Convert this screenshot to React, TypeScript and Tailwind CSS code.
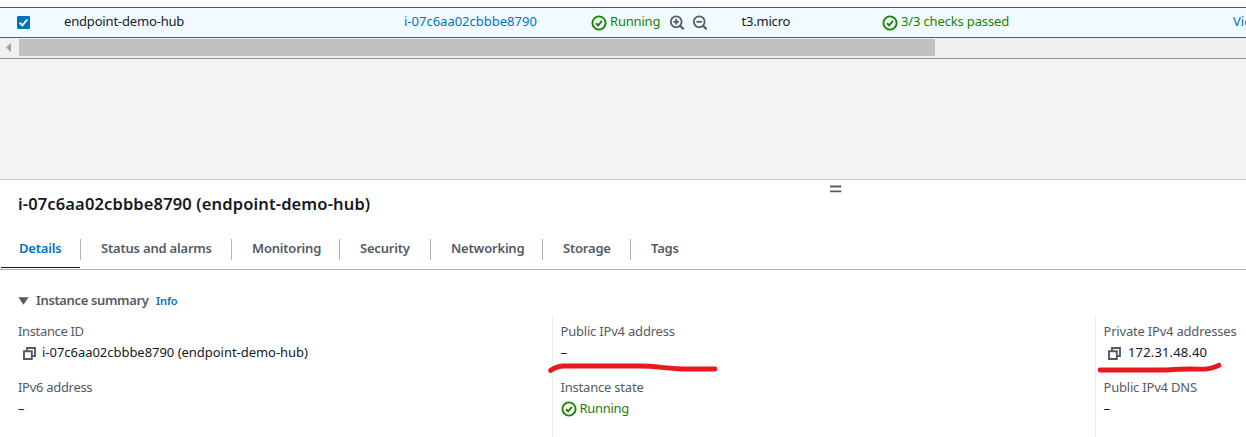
import React from "react";

type IconProps = { className?: string };

function StatusCheck({ className = "" }: IconProps) {
  return (
    <svg className={`h-4 w-4 shrink-0 ${className}`} viewBox="0 0 16 16" fill="none" stroke="currentColor" strokeWidth="1.9">
      <circle cx="8" cy="8" r="6.6" />
      <path d="M4.9 8.2 7.2 10.3 11 5.9" />
    </svg>
  );
}

function Zoom({ plus }: { plus?: boolean }) {
  return (
    <svg className="h-4 w-4 shrink-0 text-[#545b64]" viewBox="0 0 16 16" fill="none" stroke="currentColor" strokeWidth="1.8">
      <circle cx="7.2" cy="6.8" r="5.4" />
      <path d="M10.9 10.5 14.6 14.2" strokeWidth="2.2" />
      <path d="M4.4 6.8H10" strokeWidth="1.8" />
      {plus && <path d="M7.2 4V9.6" strokeWidth="1.8" />}
    </svg>
  );
}

function Copy() {
  return (
    <svg className="h-[13px] w-[13px] shrink-0 text-[#545b64]" viewBox="0 0 13 13" fill="none" stroke="currentColor" strokeWidth="1.9">
      <path d="M1 4.2H8.8V12H1Z" />
      <path d="M4 4V1H12V9H9" />
    </svg>
  );
}

const tabs = [
  { label: "Status and alarms", box: "w-[151px]" },
  { label: "Monitoring", box: "w-[108px]" },
  { label: "Security", box: "w-[91px]" },
  { label: "Networking", box: "w-[112px]" },
  { label: "Storage", box: "w-[88px]" },
  { label: "Tags", box: "w-[80px]" },
];

function Label({ children }: { children: React.ReactNode }) {
  return <div className="h-[22px] leading-[22px] tracking-[-0.2px] text-[#545b64]">{children}</div>;
}

export default function App() {
  return (
    <div className="relative flex h-[437px] w-[1246px] flex-col overflow-hidden whitespace-nowrap bg-white font-['Noto_Sans',sans-serif] text-[13px] text-[#16191f]">
      <div className="mt-[7px] flex h-[31px] shrink-0 items-center border-y border-[#0073bb] bg-[#f1faff] leading-5">
        <div className="flex w-16 shrink-0 pl-[17px]">
          <svg className="h-[13px] w-[13px]" viewBox="0 0 13 13">
            <rect width="13" height="13" rx="1.3" fill="#0073bb" />
            <path d="M2.7 6.7 5.4 9.3 10.3 3.5" fill="none" stroke="#fff" strokeWidth="1.9" />
          </svg>
        </div>
        <div className="w-[340px] shrink-0 pb-[3px] tracking-[-0.17px]">endpoint-demo-hub</div>
        <div className="w-[186.5px] shrink-0 pb-[3px] text-[#0073bb]">i-07c6aa02cbbbe8790</div>
        <div className="flex w-[151px] shrink-0 items-center text-[#1d8102]">
          <StatusCheck />
          <span className="ml-[3.5px] w-[55px] pb-[3px] tracking-[-0.2px]">Running</span>
          <span className="ml-[4px] flex gap-[7px]">
            <Zoom plus />
            <Zoom />
          </span>
        </div>
        <div className="w-[140px] shrink-0 pb-[3px] tracking-[-0.2px]">t3.micro</div>
        <div className="flex w-[351.5px] shrink-0 items-center text-[#1d8102]">
          <StatusCheck />
          <span className="ml-[3.5px] pb-[3px] tracking-[-0.15px]">3/3 checks passed</span>
        </div>
        <div className="shrink-0 pb-[3px] text-[#0073bb]">View alarms</div>
      </div>
      <div className="flex h-[20px] shrink-0 items-start bg-[#f0f0f0] pt-px">
        <svg className="h-[17px] w-[19px]" viewBox="0 0 19 17">
          <path d="M11 4V13L6 8.5Z" fill="#a0a0a0" />
        </svg>
        <div className="h-[17px] w-[916px] bg-[#c1c1c1]" />
      </div>
      <div className="h-[121px] shrink-0 border-t border-[#879596] bg-[#f2f3f3]" />
      <div className="flex h-[91px] shrink-0 flex-col border-b border-t border-b-[#aab7b8] border-t-[#c8cccc]">
        <div className="flex h-[12px] pl-[830px] pt-[5px]">
          <svg className="h-2 w-3" viewBox="0 0 12 8">
            <path d="M0 1.5H11.3M0 6.3H11.3" stroke="#545b64" strokeWidth="1.8" />
          </svg>
        </div>
        <h2 className="h-[38px] pl-[18px] text-[16.5px] font-semibold leading-6 tracking-[0.13px]">i-07c6aa02cbbbe8790 (endpoint-demo-hub)</h2>
        <div className="flex h-[38px] pl-px font-semibold tracking-[-0.2px] text-[#545b64]">
          <div className="h-[38px] w-[79px] border-b border-[#16191f]">
            <div className="mt-[9px] h-[21px] w-[80px] border-r border-[#aab7b8] pl-[18px] leading-[18px] text-[#0073bb]">Details</div>
          </div>
          <div className="mt-[9px] flex h-[21px] pl-px">
            {tabs.map((t, i) => (
              <div key={t.label} className={`${t.box} pl-[20px] leading-[18px] ${i < 5 ? "border-r border-[#aab7b8]" : ""}`}>
                {t.label}
              </div>
            ))}
          </div>
        </div>
      </div>
      <div className="flex h-[45px] shrink-0 items-center pl-[18px] pt-[17px] font-semibold text-[#545b64]">
        <svg className="h-2 w-[11px]" viewBox="0 0 11 8">
          <path d="M0.4 0.3H10.6L5.5 7.7Z" fill="#545b64" />
        </svg>
        <span className="ml-[7px] w-[120px] tracking-[-0.36px]">Instance summary</span>
        <span className="pt-px text-[11px] tracking-[-0.1px] text-[#0073bb]">Info</span>
      </div>
      <div className="flex h-[122px] shrink-0">
        <div className="w-[552px] pl-[18px] pt-[5px]">
          <Label><span className="tracking-[-0.35px]">Instance ID</span></Label>
          <div className="flex h-[20px] items-center pl-[5px] pt-0.5">
            <Copy />
            <span className="ml-[6px] tracking-[-0.03px]">i-07c6aa02cbbbe8790 (endpoint-demo-hub)</span>
          </div>
          <div className="mt-[14px]">
            <Label><span className="tracking-[-0.3px]">IPv6 address</span></Label>
          </div>
          <div className="leading-5">–</div>
        </div>
        <div className="w-[543px] border-l border-[#eaeded] pl-[7.5px] pt-[5px]">
          <Label>Public IPv4 address</Label>
          <div className="h-5 leading-5">–</div>
          <div className="mt-[14px]">
            <Label>Instance state</Label>
          </div>
          <div className="flex h-5 items-center pt-0.5 text-[#1d8102]">
            <StatusCheck />
            <span className="ml-[3px] tracking-[-0.3px]">Running</span>
          </div>
        </div>
        <div className="w-[151px] border-l border-[#eaeded] pl-[7.5px] pt-[5px]">
          <Label>Private IPv4 addresses</Label>
          <div className="flex h-5 items-center pl-1 pt-0.5">
            <Copy />
            <span className="ml-[7.5px] tracking-[0.15px]">172.31.48.40</span>
          </div>
          <div className="mt-[14px]">
            <Label>Public IPv4 DNS</Label>
          </div>
          <div className="leading-5">–</div>
        </div>
      </div>
      <svg className="pointer-events-none absolute left-[540px] top-[356px] h-6 w-[706px]" viewBox="540 356 706 24" fill="none" stroke="#e71a1f" strokeLinecap="round" strokeLinejoin="round">
        <path d="M550.5 370.5Q556 366.4 563 366H640C658 366 664 368.8 682 369H715" strokeWidth="4.8" />
        <path d="M1100 370H1166Q1186 368.5 1200 369.2C1212 369.2 1214 367 1219 365.3" strokeWidth="4.8" />
      </svg>
    </div>
  );
}
